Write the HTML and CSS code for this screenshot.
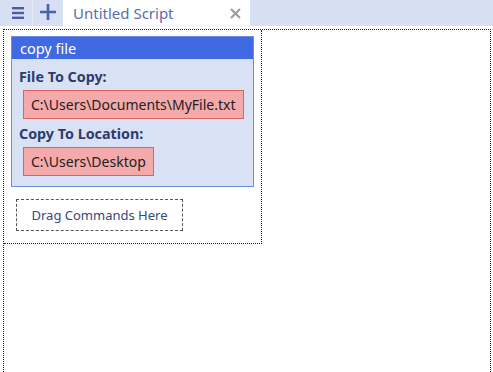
FILE: index.html
```html
<!DOCTYPE html>
<html>
<head>
<meta charset="utf-8">
<link rel="stylesheet" href="styles.css">
</head>
<body>
<div class="tabbar">
  <div class="tbtn menu">
    <svg width="12" height="12" viewBox="0 0 12 12"><rect x="0" y="0" width="12" height="2.4" fill="#4a5ca6"/><rect x="0" y="4.8" width="12" height="2.4" fill="#4a5ca6"/><rect x="0" y="9.6" width="12" height="2.4" fill="#4a5ca6"/></svg>
  </div>
  <div class="tbtn add">
    <svg width="16" height="16" viewBox="0 0 16 16"><path d="M8 0V16M0 8H16" stroke="#4762b3" stroke-width="2.6"/></svg>
  </div>
  <div class="tab">
    <span class="tab-title">Untitled Script</span>
    <svg class="tab-close" width="11" height="11" viewBox="0 0 11 11"><path d="M1 1L10 10M10 1L1 10" stroke="#9a9a9a" stroke-width="2"/></svg>
  </div>
</div>
<div class="workspace">
  <div class="script">
    <div class="card">
      <div class="card-head">copy file</div>
      <div class="card-body">
        <div class="label">File To Copy:</div>
        <div class="value">C:\Users\Documents\MyFile.txt</div>
        <div class="label second">Copy To Location:</div>
        <div class="value">C:\Users\Desktop</div>
      </div>
    </div>
    <div class="drop">Drag Commands Here</div>
  </div>
</div>
</body>
</html>
```
FILE: styles.css
```css
html, body {
  margin: 0;
  padding: 0;
  background: #ffffff;
  font-family: "Noto Sans", "Open Sans", sans-serif;
}
body {
  width: 493px;
  height: 372px;
  overflow: hidden;
}
.tabbar {
  display: flex;
  height: 26px;
  background: #d7dff2;
}
.tbtn {
  display: flex;
  align-items: center;
  justify-content: center;
  height: 26px;
}
.menu {
  width: 33px;
  padding-left: 3px;
  box-sizing: border-box;
  border-right: 1px solid #e8ecf7;
}
.add {
  width: 30px;
  padding-bottom: 2px;
  box-sizing: border-box;
}
.tab {
  display: flex;
  align-items: center;
  width: 187px;
  height: 29px;
  background: #ffffff;
  padding: 0 8px 3px 10px;
  box-sizing: border-box;
}
.tab-title {
  flex: 1;
  font-size: 15px;
  color: #5a6db0;
  white-space: nowrap;
}
.tab-close {
  flex: none;
  margin-right: 1px;
}
.workspace {
  margin: 3px 2px 0 3px;
  height: 360px;
  border-top: 1px dotted #222;
  border-left: 1px dotted #222;
  border-right: 1px dotted #222;
}
.script {
  width: 258px;
  box-sizing: border-box;
  padding: 6px 7px 12px 7px;
  border-right: 1px dotted #222;
  border-bottom: 1px dotted #222;
}
.card {
  border: 1px solid #6d8ce6;
  background: #d9e1f5;
}
.card-head {
  background: #4169e1;
  color: #ffffff;
  font-size: 14.5px;
  height: 22px;
  line-height: 22px;
  padding-left: 8px;
}
.card-body {
  padding: 8px 10px 10px 7px;
}
.label {
  font-size: 14.3px;
  font-weight: bold;
  color: #2d3c6b;
  line-height: 20px;
}
.label.second {
  margin-top: 5px;
}
.value {
  display: inline-block;
  margin: 3px 0 0 4px;
  height: 29px;
  line-height: 27px;
  box-sizing: border-box;
  padding: 0 7px;
  background: #f4a9aa;
  border: 1px solid #e06060;
  color: #222;
  font-size: 14px;
  white-space: nowrap;
}
.drop {
  display: inline-block;
  margin: 12px 0 0 5px;
  width: 167px;
  height: 32px;
  line-height: 30px;
  box-sizing: border-box;
  border: 1px dashed #555;
  text-align: center;
  font-size: 13px;
  color: #34497f;
}
```
